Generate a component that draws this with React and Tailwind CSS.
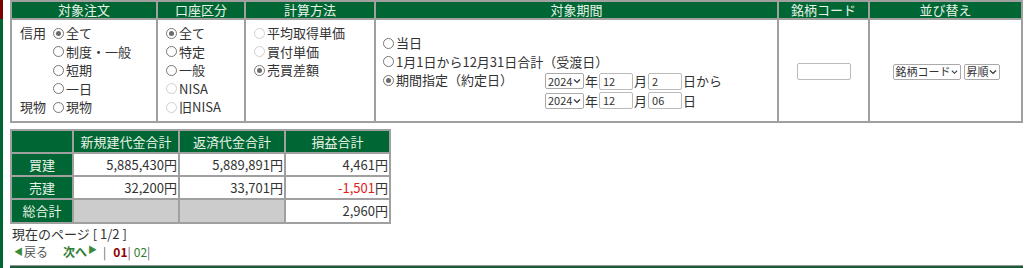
import React from "react";

const font = { fontFamily: '"Noto Sans CJK JP", "Noto Sans", sans-serif' };

function Radio({ checked, disabled }) {
  return (
    <span
      className={`inline-flex items-center justify-center w-[11px] h-[11px] rounded-full border bg-white mr-[2px] shrink-0 ${
        disabled ? "border-[#d0d0d0]" : "border-[#777]"
      }`}
    >
      {checked && <span className="w-[5px] h-[5px] rounded-full bg-[#6a6a6a]" />}
    </span>
  );
}

function Opt({ label, checked, disabled }) {
  return (
    <div className="flex items-center h-[18.5px]">
      <Radio checked={checked} disabled={disabled} />
      <span>{label}</span>
    </div>
  );
}

function Sel({ label, w }) {
  return (
    <span
      className={`inline-flex items-center justify-between h-[16px] border border-[#aaa] rounded-[2px] bg-white pl-[2px] pr-[2px] text-[11px] leading-none whitespace-nowrap ${w}`}
    >
      <span>{label}</span>
      <svg width="8" height="6" viewBox="0 0 8 6">
        <path d="M1 1.5 L4 4.5 L7 1.5" fill="none" stroke="#333" strokeWidth="1.2" />
      </svg>
    </span>
  );
}

function Box({ value, w }) {
  return (
    <span
      className={`inline-flex items-center h-[17px] border border-[#bbb] rounded-[2px] bg-white px-[3px] text-[11px] leading-none ${w}`}
    >
      {value}
    </span>
  );
}

const th = "bg-[#006633] text-[#e6f2e6] font-normal border-2 border-[#a0a0a0] h-[18px] p-0 text-center leading-[16px]";
const cell = "border-2 border-[#a0a0a0]";

export default function App() {
  return (
    <div className="flex w-[1024px] h-[268px] overflow-hidden bg-white text-[13px] text-[#333]" style={font}>
      <div className="flex flex-col w-[3px] shrink-0">
        <div className="h-[19px] bg-[#7a0000]" />
        <div className="flex-1 bg-[#006633]" />
      </div>
      <div className="flex-1 pl-[7px] pr-[1px]">
        <table className="border-collapse w-[1013px] leading-[18.5px]">
          <thead>
            <tr>
              <th className={`${th} w-[146px]`}>対象注文</th>
              <th className={`${th} w-[88px]`}>口座区分</th>
              <th className={`${th} w-[130px]`}>計算方法</th>
              <th className={`${th} w-[403px]`}>対象期間</th>
              <th className={`${th} w-[91px]`}>銘柄コード</th>
              <th className={th}>並び替え</th>
            </tr>
          </thead>
          <tbody>
            <tr className="h-[103px]">
              <td className={`${cell} align-top pl-[8px] pt-[4px]`}>
                <div className="grid grid-cols-[33px_1fr] items-center">
                  <span className="self-start h-[18.5px] flex items-center">信用</span>
                  <div>
                    <Opt label="全て" checked />
                    <Opt label="制度・一般" />
                    <Opt label="短期" />
                    <Opt label="一日" />
                  </div>
                  <span className="h-[18.5px] flex items-center">現物</span>
                  <Opt label="現物" />
                </div>
              </td>
              <td className={`${cell} align-top pl-[8px] pt-[4px]`}>
                <Opt label="全て" checked />
                <Opt label="特定" />
                <Opt label="一般" />
                <Opt label="NISA" disabled />
                <Opt label="旧NISA" disabled />
              </td>
              <td className={`${cell} align-top pl-[8px] pt-[4px]`}>
                <Opt label="平均取得単価" disabled />
                <Opt label="買付単価" disabled />
                <Opt label="売買差額" checked />
              </td>
              <td className={`${cell} align-top pl-[7px] pt-[14px]`}>
                <Opt label="当日" />
                <Opt label="1月1日から12月31日合計（受渡日）" />
                <div className="flex">
                  <div className="w-[162px]">
                    <Opt label="期間指定（約定日）" checked />
                  </div>
                  <div className="flex flex-col gap-[1px] pt-[1px]">
                    <div className="flex items-center">
                      <Sel label="2024" w="w-[39px]" />
                      <span className="mx-[1px]">年</span>
                      <Box value="12" w="w-[34px]" />
                      <span className="mx-[1px]">月</span>
                      <Box value="2" w="w-[34px]" />
                      <span className="ml-[1px]">日から</span>
                    </div>
                    <div className="flex items-center">
                      <Sel label="2024" w="w-[39px]" />
                      <span className="mx-[1px]">年</span>
                      <Box value="12" w="w-[34px]" />
                      <span className="mx-[1px]">月</span>
                      <Box value="06" w="w-[34px]" />
                      <span className="ml-[1px]">日</span>
                    </div>
                  </div>
                </div>
              </td>
              <td className={`${cell} align-middle text-center`}>
                <div className="flex justify-center pt-[2px]">
                  <Box value="" w="w-[54px]" />
                </div>
              </td>
              <td className={`${cell} align-middle`}>
                <div className="flex justify-center gap-[3px] pl-[1px] pt-[2px]">
                  <Sel label="銘柄コード" w="w-[68px]" />
                  <Sel label="昇順" w="w-[36px]" />
                </div>
              </td>
            </tr>
          </tbody>
        </table>

        <table className="border-collapse mt-[6px] w-[381px] leading-[18px]">
          <thead>
            <tr className="h-[23px]">
              <th className={`${th} w-[62px]`}></th>
              <th className={`${th} w-[106px]`}>新規建代金合計</th>
              <th className={`${th} w-[106px]`}>返済代金合計</th>
              <th className={th}>損益合計</th>
            </tr>
          </thead>
          <tbody>
            {[
              ["買建", "5,885,430", "5,889,891", "4,461", false],
              ["売建", "32,200", "33,701", "-1,501", true],
            ].map(([k, a, b, c, neg]) => (
              <tr key={k} className="h-[23px]">
                <td className={`${cell} bg-[#006633] text-[#e6f2e6] text-center`}>{k}</td>
                <td className={`${cell} text-right pr-[1px]`}>{a}円</td>
                <td className={`${cell} text-right pr-[1px]`}>{b}円</td>
                <td className={`${cell} text-right pr-[1px]`}>
                  <span className={neg ? "text-[#e02020]" : ""}>{c}</span>円
                </td>
              </tr>
            ))}
            <tr className="h-[24px]">
              <td className={`${cell} bg-[#006633] text-[#e6f2e6] text-center`}>総合計</td>
              <td className={`${cell} bg-[#cccccc]`}></td>
              <td className={`${cell} bg-[#cccccc]`}></td>
              <td className={`${cell} text-right pr-[1px]`}>2,960円</td>
            </tr>
          </tbody>
        </table>

        <div className="pl-[2px] leading-[19px] whitespace-pre">現在のページ [ 1/2 ]</div>
        <div className="flex items-center pl-[4px] text-[12px] leading-[18px]">
          <span className="text-[#3a8a3a] text-[9px] mr-[1px]">◀</span>
          <span className="text-[#555]">戻る</span>
          <span className="ml-[15px] text-[#2e7d32] font-bold">次へ</span>
          <span className="text-[#3a8a3a] text-[9px] ml-[1px] -mt-[4px]">▶</span>
          <span className="ml-[6px] text-[#666]">|</span>
          <span className="ml-[7px] text-[#8b0000] font-bold">01</span>
          <span className="text-[#666]">|</span>
          <span className="ml-[3px] text-[#2e7d32]">02</span>
          <span className="text-[#666]">|</span>
        </div>
        <div className="mt-[4px] h-[4px] w-[1013px] bg-[#1a5c36] border-t border-[#999]" />
      </div>
    </div>
  );
}
